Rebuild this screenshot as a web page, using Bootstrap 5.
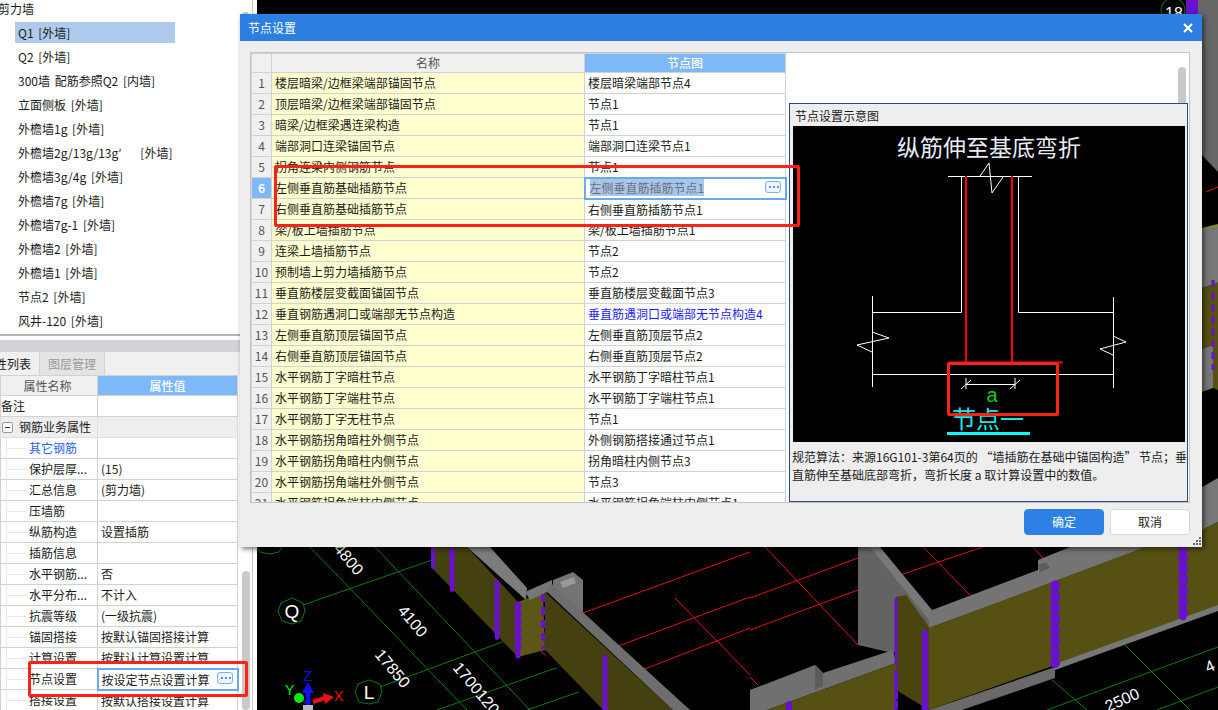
<!DOCTYPE html>
<html lang="zh-CN">
<head>
<meta charset="utf-8">
<title>节点设置</title>
<link href="https://cdn.jsdelivr.net/npm/bootstrap@5.3.0/dist/css/bootstrap.min.css" rel="stylesheet">
<style>
html,body{margin:0;background:#000}
body{font:12px/1.2 "Noto Sans CJK SC","Noto Sans",sans-serif;color:#1a1a1a}
.stage{position:relative;width:1218px;height:710px;overflow:hidden;background:#000}
.scene{position:absolute;left:0;top:0}
.scene text{font-family:"Liberation Sans",sans-serif;fill:#fff}
/* left dock */
.dock{position:absolute;left:0;top:0;width:257px;height:710px;background:#fff}
.dock-main{width:253px;height:100%;border-right:1px solid #c6c9ce;position:relative}
.tree-pane{height:336px;border-bottom:2px solid #b4b4b4;overflow:hidden}
.tree-root{height:24px;margin-top:-3px;padding-left:0;line-height:24px;margin-left:-2px}
.tree-list{margin:0;padding:0;list-style:none;word-spacing:2px}
.tree-list li{height:24px;padding:1px 0 2px 15px;line-height:21px}
.tree-list span{display:block;width:160px;height:21px;padding-left:3px;white-space:nowrap}
.tree-list .picked span{background:#aecbed}
.split{height:12px;margin-top:4px;background:#d1d3d9}
.tabbar{height:23px;background:#f0f0f0;overflow:hidden;width:241px}
.tab-on{width:39px;line-height:23px;font-size:12px;white-space:nowrap;direction:rtl;padding-right:8px;color:#1a1a1a}
.tab-off{width:66px;line-height:23px;text-align:center;background:#e4e4e4;color:#9a9a9a;border-left:1px solid #d4d4d4;border-right:1px solid #d4d4d4}
.prop-wrap{width:238px}
.gridx{table-layout:fixed;border-collapse:collapse;margin:0;background:#fff;color:#1a1a1a}
.gridx th,.gridx td{padding:0;height:21px;border:1px solid #d2d2d2;font-weight:400;font-size:12px;line-height:19px;white-space:nowrap;overflow:hidden;box-shadow:none;background:transparent;color:inherit}
.gridx th{background:#f0f0f0;color:#555;text-align:center;height:20px}
.gridx th.hot{background:#7db8f9;color:#fff;font-weight:500}
.props th:first-child{padding-right:3px}
.props td:first-child{padding-left:28px;position:relative}
.props td:last-child{padding-left:3px}
.props td.plain{padding-left:0}
.props td.branch::before{content:"";position:absolute;left:5px;width:20px;top:10px;border-top:1px solid #e6e6e6}
.props td.branch::after{content:"";position:absolute;left:5px;top:-1px;bottom:-1px;border-left:1px solid #e8e8e8}
.props tr.grp td{background:#eee;border-color:#e0e0e0}
.props tr.grp td:first-child{padding-left:18px}
.fold{position:absolute;left:1px;top:5px;width:11px;height:11px;border:1px solid #9a9a9a;border-radius:2px;background:#fff}
.fold::after{content:"";position:absolute;left:2px;right:2px;top:4px;border-top:1px solid #333}
.linkx{color:#2a62e6}
.td-edit{position:relative}
.props td.td-edit{border:2px solid #6aa9ea;padding-left:3px}
.more{position:absolute;right:4px;top:2px;width:16px;height:12px;border:1px solid #7ab0ec;border-radius:3px;background:#eef5fd}
.more::after{content:"";position:absolute;left:3px;top:4px;width:2px;height:2px;background:#5a95da;box-shadow:4px 0 0 #5a95da,8px 0 0 #5a95da}
.bar-thumb{position:absolute;background:#c9c9c9;border-radius:4px;width:8px}
/* dialog */
.dlg{position:absolute;left:240px;top:14px;width:962px;height:533px;background:#eee;box-shadow:2px 2px 5px rgba(0,0,0,.55)}
.dlg-head{height:27px;background:#2d80e2;color:#fff;padding-left:8px;line-height:27px;font-size:12px}
.dlg-close{width:28px}
.dlg-sheet{margin:11px 12px 0 10px;height:451px;width:940px;border:1px solid #c4c4c4;background:#fff;position:relative;overflow:hidden}
.nodes{width:534px;flex:none}
.gridx.nodes th{height:19px;line-height:17px}
.nodes td:first-child{background:#f0f0f0;color:#555;text-align:center}
.nodes td:nth-child(2){background:#ffffcf;padding-left:3px}
.nodes td:nth-child(3){padding-left:3px}
.nodes tr.cur td:first-child{background:#7db8f9;color:#fff;font-weight:700}
.nodes td.cell-edit{border:2px solid #6aa9ea;padding-left:4px;position:relative;line-height:17px;background:#fff}
.sel-txt{background:#a9c7ec;color:#6b6f77}
.bluex{color:#2222f0}
.demo{position:absolute;left:538px;top:50px;width:399px;height:399px;background:#eee;border:1px solid #2c4a7e;padding:0 2px 0 3px}
.demo-title{height:22px;line-height:24px;padding-left:2px}
.demo-svg{display:block;width:392px;height:316px;background:#000}
.demo-svg text{font-family:"Noto Sans CJK SC",sans-serif}
.demo-svg .ltn{font-family:"Liberation Sans",sans-serif}
.demo-note{margin:6px 0 0 -1px;width:397px;line-height:18px;color:#1a1a1a}
.dlg-foot{padding:6px 12px 0 0;gap:6px}
.btnx{width:80px;height:26px;padding:0;font-size:12px;line-height:24px;border-radius:4px}
.btnx-ok{background:#2f80e4;border:1px solid #2f80e4;color:#fff}
.btnx-no{background:#fff;border:1px solid #d8d8d8;color:#1a1a1a}
.grip{position:absolute;right:1px;bottom:1px}
.mark-box{position:absolute;border:3px solid #fb2315;border-radius:2px;pointer-events:none}
</style>
</head>
<body>
<div class="stage">
<svg class="scene" width="1218" height="710" viewBox="0 0 1218 710">
  <rect width="1218" height="710" fill="#000"/>
  <!-- right strip -->
  <polygon points="1186,0 1198,0 1198,14 1186,14" fill="#6a10d0"/>
  <polygon points="1198,0 1218,0 1218,172 1202,155 1198,150" fill="#676767"/>
  <polygon points="1202,229 1218,225 1218,283 1202,288" fill="#777"/>
  <line x1="1202" y1="229" x2="1218" y2="225" stroke="#8b8a1e" stroke-width="2"/>
  <line x1="1206" y1="192" x2="1218" y2="187" stroke="#f01010"/>
  <polygon points="1202,288 1218,282 1218,390 1213,388 1213,345 1202,349" fill="#565113"/>
  <polygon points="1202,349 1213,345 1213,388 1202,392" fill="#777"/>
  <line x1="1213" y1="280" x2="1213" y2="370" stroke="#6a10d0" stroke-width="3" stroke-dasharray="7 5"/>
  <polygon points="1202,487 1218,478 1218,522 1202,530" fill="#777"/>
  <polygon points="1202,530 1218,522 1218,610 1145,636 1145,547" fill="#565113"/>
  <circle cx="1173" cy="10" r="12" fill="none" stroke="#0c7a0c"/>
  <text x="1165" y="19" font-size="16">18</text>
  <!-- red grid -->
  <g stroke="#e81010" stroke-width="1" fill="none">
    <path d="M583 613L750 552M613 648L750 597M637 672L750 628M675 598L750 675M530 640L600 710"/>
    <path d="M750 598L858 558M750 630L858 590M900 575L983 547M765 547L858 645M923 547L970 595M1033 547L1043 558M750 677L758 685"/>
  </g>
  <!-- green grid -->
  <g stroke="#0c7a0c" stroke-width="1" fill="none">
    <path d="M303 605L432 560M310 547L467 710M375 547L530 710M380 687L513 638M437 710L570 663M527 710L593 687"/>
    <path d="M1123 643L1190 710M1052 680L1087 710M1047 710L1218 647M1157 710L1218 687"/>
    <polygon points="292,598 303,603 305,611 301,621 292,624 282,621 278,611 281,603"/>
    <polygon points="369,680 380,684 382,692 378,702 369,704 359,702 355,692 358,684"/>
    <polygon points="270,534 281,539 283,545 279,552 270,554 260,552 256,545 259,539"/>
  </g>
  <!-- left wall -->
  <polygon points="467,547 490,547 527,588 526,600" fill="#7c7c7c"/>
  <polygon points="432,547 467,547 518,602 518,657 432,568" fill="#45400f"/>
  <polygon points="518,602 543,592 545,650 518,657" fill="#5c5717"/>
  <polygon points="525,592 552,580 552,590 530,600" fill="#777"/>
  <polygon points="553,580 573,572 583,580 583,616 553,586" fill="#747474"/>
  <polygon points="560,582 574,577 576,583 563,588" fill="#999"/>
  <polygon points="545,592 673,710 603,710 545,650" fill="#45400f"/>
  <polygon points="545,590 552,584 690,710 673,710" fill="#6e6e6e"/>
  <polygon points="545,650 603,710 595,710 545,655" fill="#000"/>
  <!-- back walls -->
  <polygon points="858,547 873,547 930,610 929,627 893,653 858,645" fill="#636363"/>
  <polygon points="870,547 880,547 932,610 929,620" fill="#787878"/>
  <polygon points="929,628 929,616 932,610 1038,570 1038,560 1070,547 1150,547 929,628" fill="#747474"/>
  <polygon points="1038,565 1046,562 1050,568 1040,572" fill="#5c5c5c"/>
  <!-- right long wall -->
  <polygon points="929,628 1145,547 1218,547 1218,607 929,710" fill="#565113"/>
  <polygon points="1055,664 1218,605 1218,611 1055,670" fill="#777"/>
  <polygon points="929,710 1055,667 1055,678 962,710" fill="#6a6a6a"/>
  <polygon points="896,597 906,595 929,627 929,710 896,690" fill="#4a450f"/>
  <polygon points="750,690 815,665 823,673 893,650 896,663 767,710 750,710" fill="#707070"/>
  <polygon points="815,665 823,673 823,686 815,690" fill="#5c5c5c"/>
  <polygon points="767,710 896,663 896,710" fill="#565113"/>
  <!-- rebar: a thin core with round bumps -->
  <g fill="none" stroke="#6a10d0" stroke-linecap="round">
    <path d="M433 547V567" stroke-width="4"/>
    <path d="M452 548V590" stroke-width="4"/>
    <path d="M497 582V638" stroke-width="4"/>
    <path d="M518 604V656" stroke-width="5"/>
    <path d="M605 657V710" stroke-width="4"/>
    <path d="M925 632V710" stroke-width="5"/>
    <path d="M1055 584V664" stroke-width="7"/>
    <path d="M1183 547V617" stroke-width="7"/>
    <path d="M896 599V664" stroke-width="3"/>
    <path d="M896 672V710" stroke-width="4" stroke-dasharray="6 4"/>
    <path d="M789 704V710" stroke-width="6"/>
    <path d="M452 552V590M497 584V638M605 660V710" stroke-width="6" stroke-dasharray="0 8"/>
    <path d="M518 606V654M925 636V710" stroke-width="7" stroke-dasharray="0 8"/>
    <path d="M1055 586V664M1183 547V617" stroke-width="10" stroke-dasharray="0 11"/>
  </g>
  <path d="M543 594V649" stroke="#6a10d0" stroke-width="4" stroke-dasharray="8 5" fill="none"/>
  <!-- labels -->
  <text x="292" y="618" font-size="19" text-anchor="middle">Q</text>
  <text x="369" y="699" font-size="19" text-anchor="middle">L</text>
  <text font-size="16" transform="translate(333,549) rotate(50)">4800</text>
  <text font-size="16" transform="translate(397,611) rotate(50)">4100</text>
  <text font-size="16" transform="translate(374,655) rotate(50)">17850</text>
  <text font-size="16" transform="translate(452,668) rotate(50)">1700120</text>
  <text font-size="16" transform="translate(1108,712) rotate(-24)">2500</text>
  <text font-size="16" x="1208" y="673" transform="rotate(-24 1208 673)">4</text>
  <!-- axes -->
  <polygon points="303,705 313,705 313,710 303,710" fill="#bbb"/>
  <path d="M299 698L306 703" stroke="#222" stroke-width="3"/>
  <circle cx="299" cy="698" r="5" fill="#12e812"/>
  <path d="M308 705V691" stroke="#1010f0" stroke-width="5"/>
  <polygon points="302,693 308,682 314,693" fill="#1010f0"/>
  <path d="M313 702L325 698" stroke="#f01010" stroke-width="4"/>
  <polygon points="323,693 334,697 325,704" fill="#f01010"/>
  <text x="285" y="695" font-size="14" style="fill:#12e812">Y</text>
  <text x="303" y="681" font-size="15" style="fill:#1010f0">Z</text>
  <text x="334" y="701" font-size="14" style="fill:#f01010">X</text>
</svg>

<aside class="dock">
  <div class="dock-main">
    <div class="tree-pane">
      <div class="tree-root">剪力墙</div>
      <ul class="tree-list">
        <li class="picked"><span>Q1 [外墙]</span></li>
        <li><span>Q2 [外墙]</span></li>
        <li><span>300墙 配筋参照Q2 [内墙]</span></li>
        <li><span>立面侧板 [外墙]</span></li>
        <li><span>外檐墙1g [外墙]</span></li>
        <li><span>外檐墙2g/13g/13g′&nbsp;&nbsp;&nbsp;&nbsp;[外墙]</span></li>
        <li><span>外檐墙3g/4g [外墙]</span></li>
        <li><span>外檐墙7g [外墙]</span></li>
        <li><span>外檐墙7g-1 [外墙]</span></li>
        <li><span>外檐墙2 [外墙]</span></li>
        <li><span>外檐墙1 [外墙]</span></li>
        <li><span>节点2 [外墙]</span></li>
        <li><span>风井-120 [外墙]</span></li>
      </ul>
    </div>
    <div class="split"></div>
    <div class="tabbar d-flex">
      <div class="tab-on">属性列表</div>
      <div class="tab-off">图层管理</div>
    </div>
    <div class="prop-wrap">
      <table class="table gridx props" style="width:237px">
        <colgroup><col style="width:97px"><col style="width:140px"></colgroup>
        <tr><th>属性名称</th><th class="hot">属性值</th></tr>
        <tr><td class="plain">备注</td><td></td></tr>
        <tr class="grp"><td><i class="fold"></i>钢筋业务属性</td><td></td></tr>
        <tr><td class="branch"><span class="linkx">其它钢筋</span></td><td></td></tr>
        <tr><td class="branch">保护层厚...</td><td>(15)</td></tr>
        <tr><td class="branch">汇总信息</td><td>(剪力墙)</td></tr>
        <tr><td class="branch">压墙筋</td><td></td></tr>
        <tr><td class="branch">纵筋构造</td><td>设置插筋</td></tr>
        <tr><td class="branch">插筋信息</td><td></td></tr>
        <tr><td class="branch">水平钢筋...</td><td>否</td></tr>
        <tr><td class="branch">水平分布...</td><td>不计入</td></tr>
        <tr><td class="branch">抗震等级</td><td>(一级抗震)</td></tr>
        <tr><td class="branch">锚固搭接</td><td>按默认锚固搭接计算</td></tr>
        <tr><td class="branch">计算设置</td><td>按默认计算设置计算</td></tr>
        <tr><td class="branch">节点设置</td><td class="td-edit">按设定节点设置计算<i class="more"></i></td></tr>
        <tr><td class="branch">搭接设置</td><td>按默认搭接设置计算</td></tr>
      </table>
    </div>
    <div class="bar-thumb" style="left:242px;top:571px;height:139px"></div>
    <div class="bar-thumb" style="left:242px;top:12px;height:8px;width:7px"></div>
  </div>
</aside>

<section class="dlg">
  <div class="dlg-head d-flex justify-content-between">
    <span>节点设置</span>
    <span class="dlg-close d-flex align-items-center justify-content-center"><svg width="10" height="10" viewBox="0 0 10 10"><path d="M1 1L9 9M9 1L1 9" stroke="#fff" stroke-width="2"/></svg></span>
  </div>
  <div class="dlg-sheet d-flex">
    <div class="nodes">
      <table class="table gridx nodes" style="width:534px">
        <colgroup><col style="width:20px"><col style="width:313px"><col style="width:201px"></colgroup>
        <tr><th></th><th>名称</th><th class="hot">节点图</th></tr>
        <tr><td>1</td><td>楼层暗梁/边框梁端部锚固节点</td><td>楼层暗梁端部节点4</td></tr>
        <tr><td>2</td><td>顶层暗梁/边框梁端部锚固节点</td><td>节点1</td></tr>
        <tr><td>3</td><td>暗梁/边框梁遇连梁构造</td><td>节点1</td></tr>
        <tr><td>4</td><td>端部洞口连梁锚固节点</td><td>端部洞口连梁节点1</td></tr>
        <tr><td>5</td><td>拐角连梁内侧钢筋节点</td><td>节点1</td></tr>
        <tr class="cur"><td>6</td><td>左侧垂直筋基础插筋节点</td><td class="cell-edit"><span class="sel-txt">左侧垂直筋插筋节点1</span><i class="more"></i></td></tr>
        <tr><td>7</td><td>右侧垂直筋基础插筋节点</td><td>右侧垂直筋插筋节点1</td></tr>
        <tr><td>8</td><td>梁/板上墙插筋节点</td><td>梁/板上墙插筋节点1</td></tr>
        <tr><td>9</td><td>连梁上墙插筋节点</td><td>节点2</td></tr>
        <tr><td>10</td><td>预制墙上剪力墙插筋节点</td><td>节点2</td></tr>
        <tr><td>11</td><td>垂直筋楼层变截面锚固节点</td><td>垂直筋楼层变截面节点3</td></tr>
        <tr><td>12</td><td>垂直钢筋遇洞口或端部无节点构造</td><td><span class="bluex">垂直筋遇洞口或端部无节点构造4</span></td></tr>
        <tr><td>13</td><td>左侧垂直筋顶层锚固节点</td><td>左侧垂直筋顶层节点2</td></tr>
        <tr><td>14</td><td>右侧垂直筋顶层锚固节点</td><td>右侧垂直筋顶层节点2</td></tr>
        <tr><td>15</td><td>水平钢筋丁字暗柱节点</td><td>水平钢筋丁字暗柱节点1</td></tr>
        <tr><td>16</td><td>水平钢筋丁字端柱节点</td><td>水平钢筋丁字端柱节点1</td></tr>
        <tr><td>17</td><td>水平钢筋丁字无柱节点</td><td>节点1</td></tr>
        <tr><td>18</td><td>水平钢筋拐角暗柱外侧节点</td><td>外侧钢筋搭接通过节点1</td></tr>
        <tr><td>19</td><td>水平钢筋拐角暗柱内侧节点</td><td>拐角暗柱内侧节点3</td></tr>
        <tr><td>20</td><td>水平钢筋拐角端柱外侧节点</td><td>节点3</td></tr>
        <tr><td>21</td><td>水平钢筋拐角端柱内侧节点</td><td>水平钢筋拐角端柱内侧节点1</td></tr>
      </table>
    </div>
    <div class="bar-thumb" style="left:927px;top:14px;height:60px"></div>
    <div class="demo">
      <div class="demo-title">节点设置示意图</div>
      <svg class="demo-svg" viewBox="793 126 392 316">
        <text x="989" y="156" font-size="23" fill="#e6ecf4" text-anchor="middle">纵筋伸至基底弯折</text>
        <g stroke="#fff" fill="none">
          <path d="M948 176.5H1032"/>
          <path d="M980 176L989 163L992 193L1003 177"/>
          <path d="M961.5 176V312.5H872.5M1018.5 176V312.5H1113"/>
          <path d="M872.5 296V387M1113.5 297V388"/>
          <path d="M872 374.5H1113"/>
          <path d="M872 332L889 338L857 345L872 352M1113 336L1126 342L1100 349L1113 355"/>
          <path d="M966 384.5H1015M961 389L971 380M1010 389L1020 380M966 378V389M1015 378V389"/>
        </g>
        <path d="M966 176V362M1012 176V362M948 362.5H1063" stroke="#f00" stroke-width="2" fill="none"/>
        <text class="ltn" x="992" y="402" font-size="20" fill="#10d010" text-anchor="middle">a</text>
        <text x="988" y="428" font-size="24" fill="#1ce6ec" text-anchor="middle">节点一</text>
        <rect x="947" y="432" width="83" height="3" fill="#0ff"/>
      </svg>
      <div class="demo-note">规范算法：来源16G101-3第64页的 “墙插筋在基础中锚固构造” 节点；垂直筋伸至基础底部弯折，弯折长度 a 取计算设置中的数值。</div>
    </div>
  </div>
  <div class="dlg-foot d-flex justify-content-end">
    <button type="button" class="btn btnx btnx-ok">确定</button>
    <button type="button" class="btn btnx btnx-no">取消</button>
  </div>
  <svg class="grip" width="9" height="9" viewBox="0 0 9 9"><path d="M7 0h2v2H7zM4 3h2v2H4zM7 3h2v2H7zM1 6h2v2H1zM4 6h2v2H4zM7 6h2v2H7z" fill="#666"/></svg>
</section>

<div class="mark-box" style="left:274px;top:165px;width:526px;height:62px"></div>
<div class="mark-box" style="left:947px;top:362px;width:112px;height:54px"></div>
<div class="mark-box" style="left:28px;top:661px;width:220px;height:36px"></div>
</div>
<script src="https://cdn.jsdelivr.net/npm/bootstrap@5.3.0/dist/js/bootstrap.bundle.min.js"></script>
</body>
</html>
